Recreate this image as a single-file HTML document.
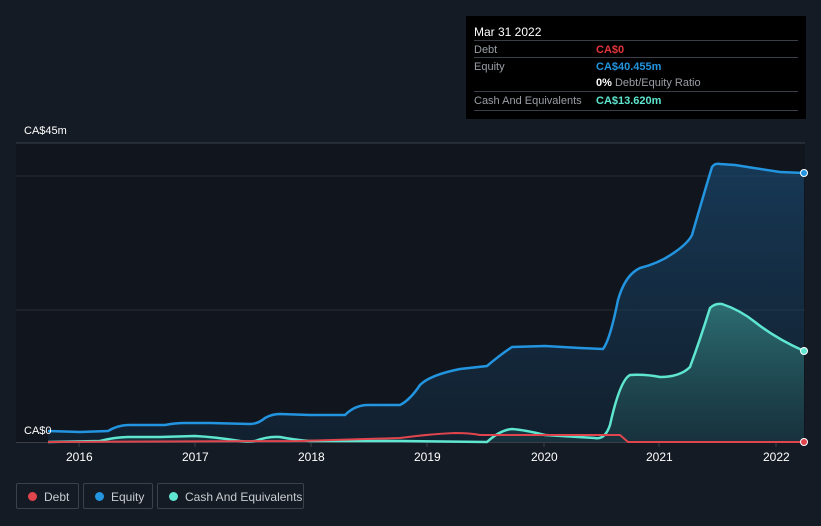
<!DOCTYPE html>
<html><head><style>
body{margin:0;width:821px;height:526px;background:#151b24;font-family:"Liberation Sans",sans-serif;overflow:hidden;position:relative}
.tt{position:absolute;left:466px;top:16px;width:340px;height:103px;background:#000;color:#fff;font-size:11px}
.tt .h{position:absolute;left:8px;top:9px;font-size:12px}
.row{position:absolute;left:8px;width:324px;border-top:1px solid #3a3f47;height:17px}
.row span{position:absolute;top:3px}
.l{left:0;color:#9a9ea5}.v{left:122px;font-weight:bold}
.lg{position:absolute;top:483px;height:26px;border:1px solid #3b414b;border-radius:2px;color:#c9ccd1;font-size:12px;line-height:26px;box-sizing:border-box}
.lg i{position:absolute;top:8px;left:11px;width:9px;height:9px;border-radius:50%}
.lg span{position:absolute;left:27px}
.ax{position:absolute;top:450px;color:#fff;font-size:12px}
</style></head><body>
<svg width="821" height="526" style="position:absolute;left:0;top:0">
<defs><linearGradient id="g" x1="0" y1="0" x2="0" y2="1"><stop offset="0" stop-color="#1a4f7a" stop-opacity=".6"/><stop offset="1" stop-color="#14304a" stop-opacity=".4"/></linearGradient>
<linearGradient id="c" x1="0" y1="0" x2="0" y2="1"><stop offset="0" stop-color="#3fa39a" stop-opacity=".55"/><stop offset="1" stop-color="#1f4b50" stop-opacity=".4"/></linearGradient></defs>
<rect x="16" y="143" width="789" height="299" fill="#11161e"/>
<line x1="16" y1="143" x2="805" y2="143" stroke="#3a3f47"/>
<line x1="16" y1="176" x2="805" y2="176" stroke="#262c35"/>
<line x1="16" y1="310" x2="805" y2="310" stroke="#262c35"/>
<line x1="16" y1="442.5" x2="805" y2="442.5" stroke="#3a3f47"/>
<g stroke="#3a3f47"><line x1="79" y1="442" x2="79" y2="447"/><line x1="195" y1="442" x2="195" y2="447"/><line x1="311" y1="442" x2="311" y2="447"/><line x1="427" y1="442" x2="427" y2="447"/><line x1="544" y1="442" x2="544" y2="447"/><line x1="659" y1="442" x2="659" y2="447"/><line x1="776" y1="442" x2="776" y2="447"/></g>
<path d="M48,431 L80,432 L108,431 Q118,425 130,425 L165,425 Q175,423 185,423 L210,423 L250,424 Q258,424 265,418 Q272,414 280,414 L310,415 L345,415 Q355,405 368,405 L400,405 Q410,400 420,385 Q430,375 460,369 L487,366 Q500,355 512,347 L545,346 L580,348 L603,349 Q610,340 618,300 Q625,275 640,268 Q660,263 675,252 Q688,243 692,235 Q705,190 712,167 Q715,163 720,164 L735,165 Q760,169 780,172 L804,173 L804,442 L48,442Z" fill="url(#g)" stroke="none"/>
<path d="M48,431 L80,432 L108,431 Q118,425 130,425 L165,425 Q175,423 185,423 L210,423 L250,424 Q258,424 265,418 Q272,414 280,414 L310,415 L345,415 Q355,405 368,405 L400,405 Q410,400 420,385 Q430,375 460,369 L487,366 Q500,355 512,347 L545,346 L580,348 L603,349 Q610,340 618,300 Q625,275 640,268 Q660,263 675,252 Q688,243 692,235 Q705,190 712,167 Q715,163 720,164 L735,165 Q760,169 780,172 L804,173" fill="none" stroke="#2394df" stroke-width="2.5"/>
<path d="M48,442 L100,441 Q115,437 130,437 L160,437 L195,436 Q215,437 240,441 Q248,442 255,441 Q268,436 280,437 Q295,440 310,441 L345,441 L400,441 L487,442 Q500,430 512,429 Q525,430 545,435 L595,438 Q605,440 610,425 Q620,380 630,375 Q645,374 660,377 Q680,377 690,367 Q700,340 710,308 Q715,303 722,304 Q740,310 755,322 Q775,338 804,351 L804,442 L48,442Z" fill="url(#c)"/>
<path d="M48,442 L100,441 Q115,437 130,437 L160,437 L195,436 Q215,437 240,441 Q248,442 255,441 Q268,436 280,437 Q295,440 310,441 L345,441 L400,441 L487,442 Q500,430 512,429 Q525,430 545,435 L595,438 Q605,440 610,425 Q620,380 630,375 Q645,374 660,377 Q680,377 690,367 Q700,340 710,308 Q715,303 722,304 Q740,310 755,322 Q775,338 804,351" fill="none" stroke="#5ee6d0" stroke-width="2.5"/>
<path d="M48,442 L300,441 L400,438 Q430,434 455,433 Q470,433 480,435 L620,435 L628,442 L804,442" fill="none" stroke="#e0454e" stroke-width="2"/>
<circle cx="804" cy="173" r="3.5" fill="#2394df" stroke="#fff" stroke-width="1"/>
<circle cx="804" cy="351" r="3.5" fill="#5ee6d0" stroke="#fff" stroke-width="1"/>
<circle cx="804" cy="442" r="3.5" fill="#e0454e" stroke="#fff" stroke-width="1"/>
</svg>
<div style="position:absolute;left:24px;top:125px;color:#fff;font-size:11px">CA$45m</div>
<div style="position:absolute;left:24px;top:425px;color:#fff;font-size:11px">CA$0</div>
<div class="ax" style="left:66px">2016</div><div class="ax" style="left:182px">2017</div><div class="ax" style="left:298px">2018</div><div class="ax" style="left:414px">2019</div><div class="ax" style="left:531px">2020</div><div class="ax" style="left:646px">2021</div><div class="ax" style="left:763px">2022</div>
<div class="tt"><div class="h">Mar 31 2022</div>
<div class="row" style="top:24px"><span class="l">Debt</span><span class="v" style="color:#e3343c">CA$0</span></div>
<div class="row" style="top:41px"><span class="l">Equity</span><span class="v" style="color:#2394df">CA$40.455m</span></div>
<div class="row" style="top:58px;border-top:none"><span class="v" style="color:#fff">0% <b style="color:#9a9ea5;font-weight:normal">Debt/Equity Ratio</b></span></div>
<div class="row" style="top:75px;height:18px;border-bottom:1px solid #3a3f47"><span class="l">Cash And Equivalents</span><span class="v" style="color:#5ee6d0">CA$13.620m</span></div>
</div>
<div class="lg" style="left:16px;width:63px"><i style="background:#e0454e"></i><span>Debt</span></div>
<div class="lg" style="left:83px;width:70px"><i style="background:#2394df"></i><span>Equity</span></div>
<div class="lg" style="left:157px;width:147px"><i style="background:#5ee6d0"></i><span>Cash And Equivalents</span></div>
</body></html>
